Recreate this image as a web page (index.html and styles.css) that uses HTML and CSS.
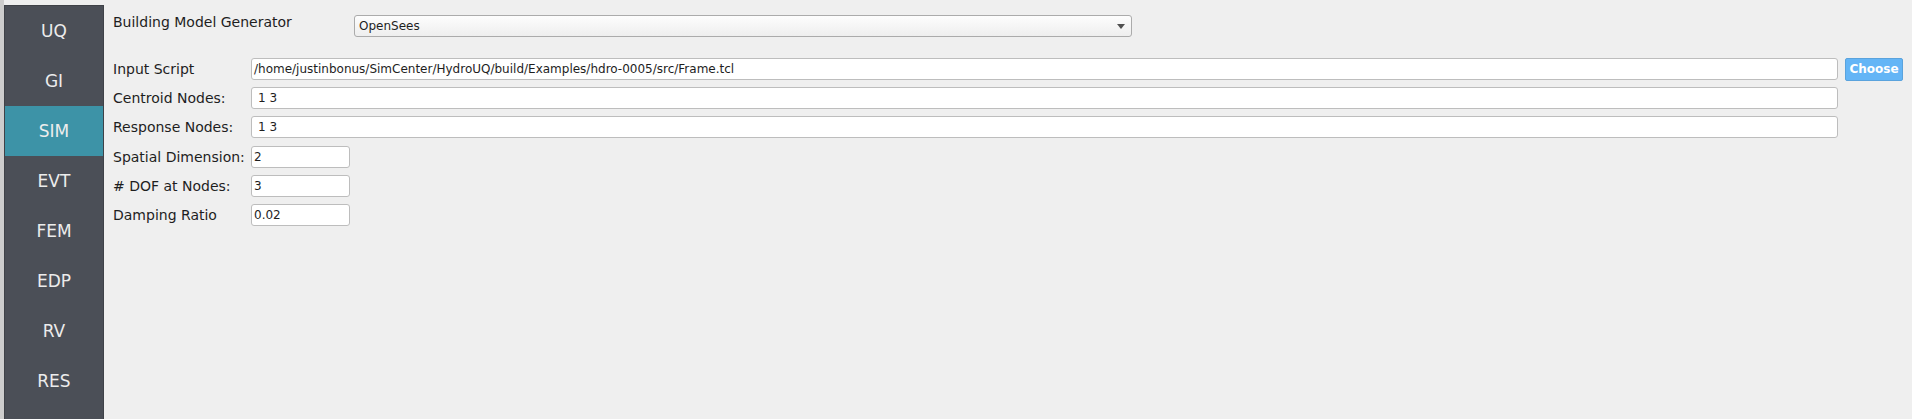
FILE: index.html
```html
<!DOCTYPE html>
<html lang="en">
<head>
<meta charset="utf-8">
<title>SIM</title>
<link rel="stylesheet" href="styles.css">
</head>
<body>
<div class="app">
  <div class="edge"></div>
  <nav class="sidebar">
    <div class="nav-item">UQ</div>
    <div class="nav-item">GI</div>
    <div class="nav-item active">SIM</div>
    <div class="nav-item">EVT</div>
    <div class="nav-item">FEM</div>
    <div class="nav-item">EDP</div>
    <div class="nav-item">RV</div>
    <div class="nav-item">RES</div>
  </nav>
  <main class="content">
    <div class="gen-row">
      <span class="label gen-label">Building Model Generator</span>
      <div class="combo"><span class="combo-text">OpenSees</span><span class="arrow"></span></div>
    </div>
    <div class="form">
      <div class="row">
        <span class="label row-label">Input Script</span>
        <div class="field wide">/home/justinbonus/SimCenter/HydroUQ/build/Examples/hdro-0005/src/Frame.tcl</div>
        <button class="choose">Choose</button>
      </div>
      <div class="row">
        <span class="label row-label">Centroid Nodes:</span>
        <div class="field wide indent">1 3</div>
      </div>
      <div class="row">
        <span class="label row-label">Response Nodes:</span>
        <div class="field wide indent">1 3</div>
      </div>
      <div class="row shift">
        <span class="label row-label">Spatial Dimension:</span>
        <div class="field small">2</div>
      </div>
      <div class="row">
        <span class="label row-label"># DOF at Nodes:</span>
        <div class="field small">3</div>
      </div>
      <div class="row">
        <span class="label row-label">Damping Ratio</span>
        <div class="field small">0.02</div>
      </div>
    </div>
  </main>
</div>
</body>
</html>
```
FILE: styles.css
```css
html, body {
  margin: 0;
  padding: 0;
  height: 100%;
  background: #efefef;
  font-family: "DejaVu Sans", "Noto Sans", sans-serif;
  color: #1e1e1e;
}

.app {
  display: flex;
  height: 419px;
  overflow: hidden;
}

.edge {
  width: 4px;
  flex: none;
  background: #cdcdcd;
}

.sidebar {
  flex: none;
  width: 98px;
  margin-top: 5px;
  background: #4b4f57;
  border: 1px solid #3f4248;
  border-bottom: none;
  display: flex;
  flex-direction: column;
}

.nav-item {
  height: 50px;
  display: flex;
  align-items: center;
  justify-content: center;
  color: #ececec;
  font-size: 17px;
}

.nav-item.active {
  background: #3d93a7;
}

.content {
  flex: 1;
  padding: 15px 0 0 9px;
  display: flex;
  flex-direction: column;
}

.label {
  font-size: 14px;
  line-height: 17px;
  white-space: nowrap;
}

.gen-row {
  display: flex;
  align-items: flex-start;
}

.gen-label {
  width: 241px;
  margin-top: -1px;
}

.combo {
  box-sizing: border-box;
  width: 778px;
  height: 22px;
  border: 1px solid #ababab;
  border-radius: 3px;
  background: linear-gradient(#fdfdfd, #eeeeee);
  display: flex;
  align-items: center;
  justify-content: space-between;
  padding: 0 6px 0 4px;
  font-size: 12px;
}

.arrow {
  width: 0;
  height: 0;
  border-left: 4px solid transparent;
  border-right: 4px solid transparent;
  border-top: 5px solid #505050;
  margin-top: 1px;
}

.form {
  margin-top: 21px;
  display: flex;
  flex-direction: column;
  gap: 7px;
}

.row {
  display: flex;
  align-items: center;
  height: 22px;
}

.row.shift {
  margin-top: 1px;
}

.row-label {
  width: 138px;
}

.field {
  box-sizing: border-box;
  height: 22px;
  background: #ffffff;
  border: 1px solid #bdbdbd;
  border-radius: 3px;
  font-size: 12px;
  line-height: 20px;
  padding: 0 2px;
  white-space: nowrap;
  overflow: hidden;
}

.field.wide {
  width: 1587px;
}

.field.indent {
  padding-left: 6px;
}

.field.small {
  width: 99px;
}

.choose {
  box-sizing: border-box;
  margin-left: 7px;
  width: 58px;
  height: 23px;
  padding: 0;
  background: #64b5f6;
  border: 1px solid #5aa3dd;
  border-radius: 2px;
  color: #ffffff;
  font-family: "DejaVu Sans", sans-serif;
  font-weight: bold;
  font-size: 12px;
}
```
